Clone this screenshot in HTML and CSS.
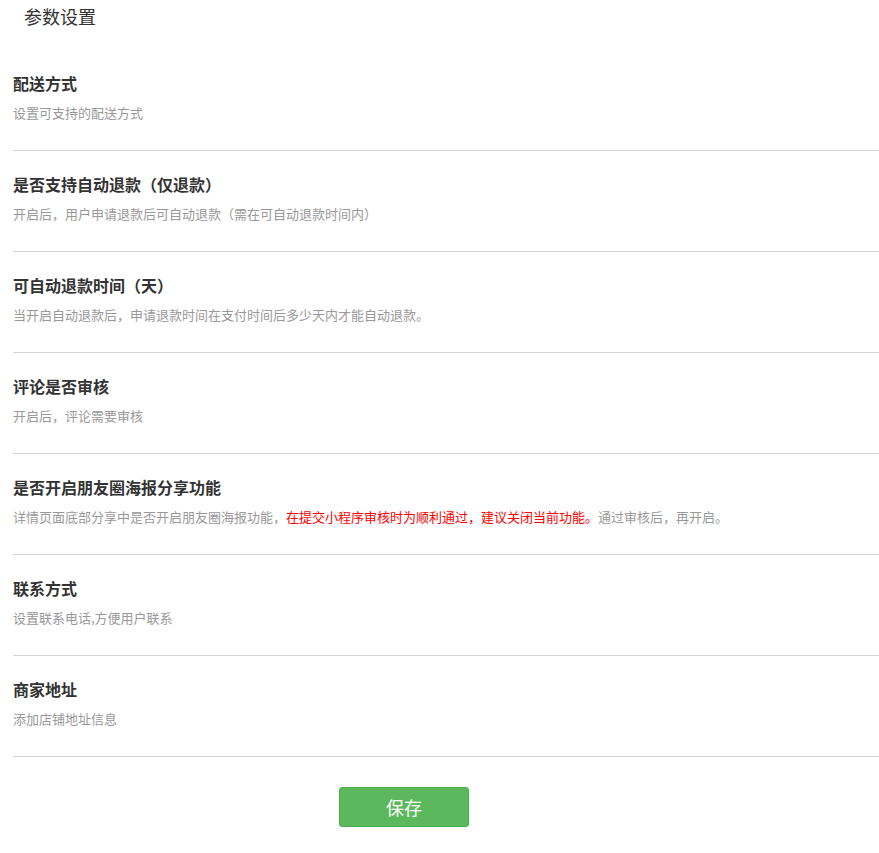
FILE: index.html
```html
<!DOCTYPE html>
<html lang="zh-CN">
<head>
<meta charset="utf-8">
<title>参数设置</title>
<link rel="stylesheet" href="styles.css">
</head>
<body>
<div class="page">
  <div class="page-title">参数设置</div>
  <div class="settings">
    <div class="item">
      <div class="item-title">配送方式</div>
      <div class="item-desc">设置可支持的配送方式</div>
    </div>
    <div class="item">
      <div class="item-title">是否支持自动退款（仅退款）</div>
      <div class="item-desc">开启后，用户申请退款后可自动退款（需在可自动退款时间内）</div>
    </div>
    <div class="item">
      <div class="item-title">可自动退款时间（天）</div>
      <div class="item-desc">当开启自动退款后，申请退款时间在支付时间后多少天内才能自动退款。</div>
    </div>
    <div class="item">
      <div class="item-title">评论是否审核</div>
      <div class="item-desc">开启后，评论需要审核</div>
    </div>
    <div class="item">
      <div class="item-title">是否开启朋友圈海报分享功能</div>
      <div class="item-desc">详情页面底部分享中是否开启朋友圈海报功能，<span class="warn">在提交小程序审核时为顺利通过，建议关闭当前功能。</span>通过审核后，再开启。</div>
    </div>
    <div class="item">
      <div class="item-title">联系方式</div>
      <div class="item-desc">设置联系电话,方便用户联系</div>
    </div>
    <div class="item">
      <div class="item-title">商家地址</div>
      <div class="item-desc">添加店铺地址信息</div>
    </div>
  </div>
  <div class="actions">
    <button class="btn-save" type="button">保存</button>
  </div>
</div>
</body>
</html>
```

FILE: styles.css
```css
html, body {
  margin: 0;
  padding: 0;
  background: #fff;
}
body {
  font-family: "Noto Sans CJK SC", "Microsoft YaHei", "Noto Sans", sans-serif;
  color: #333;
}
.page {
  padding-left: 13px;
}
.page-title {
  height: 50px;
  box-sizing: border-box;
  padding-top: 5px;
  padding-left: 11px;
  font-size: 18px;
  line-height: 22px;
  color: #333;
}
.item {
  padding: 23px 0 27px;
  border-bottom: 1px solid #d4d4d4;
}
.item-title {
  font-size: 16px;
  line-height: 20px;
  font-weight: bold;
  color: #333;
}
.item-desc {
  margin-top: 10px;
  font-size: 13px;
  line-height: 20px;
  color: #999;
}
.warn {
  color: #f00;
}
.actions {
  padding-top: 30px;
  padding-left: 326px;
}
.btn-save {
  width: 130px;
  height: 40px;
  border: 1px solid #4cae4c;
  border-radius: 3px;
  background: #5cb85c;
  color: #fff;
  font-family: "Noto Sans CJK SC", "Microsoft YaHei", sans-serif;
  font-size: 18px;
  line-height: 20px;
  padding: 0;
  cursor: pointer;
}
```
